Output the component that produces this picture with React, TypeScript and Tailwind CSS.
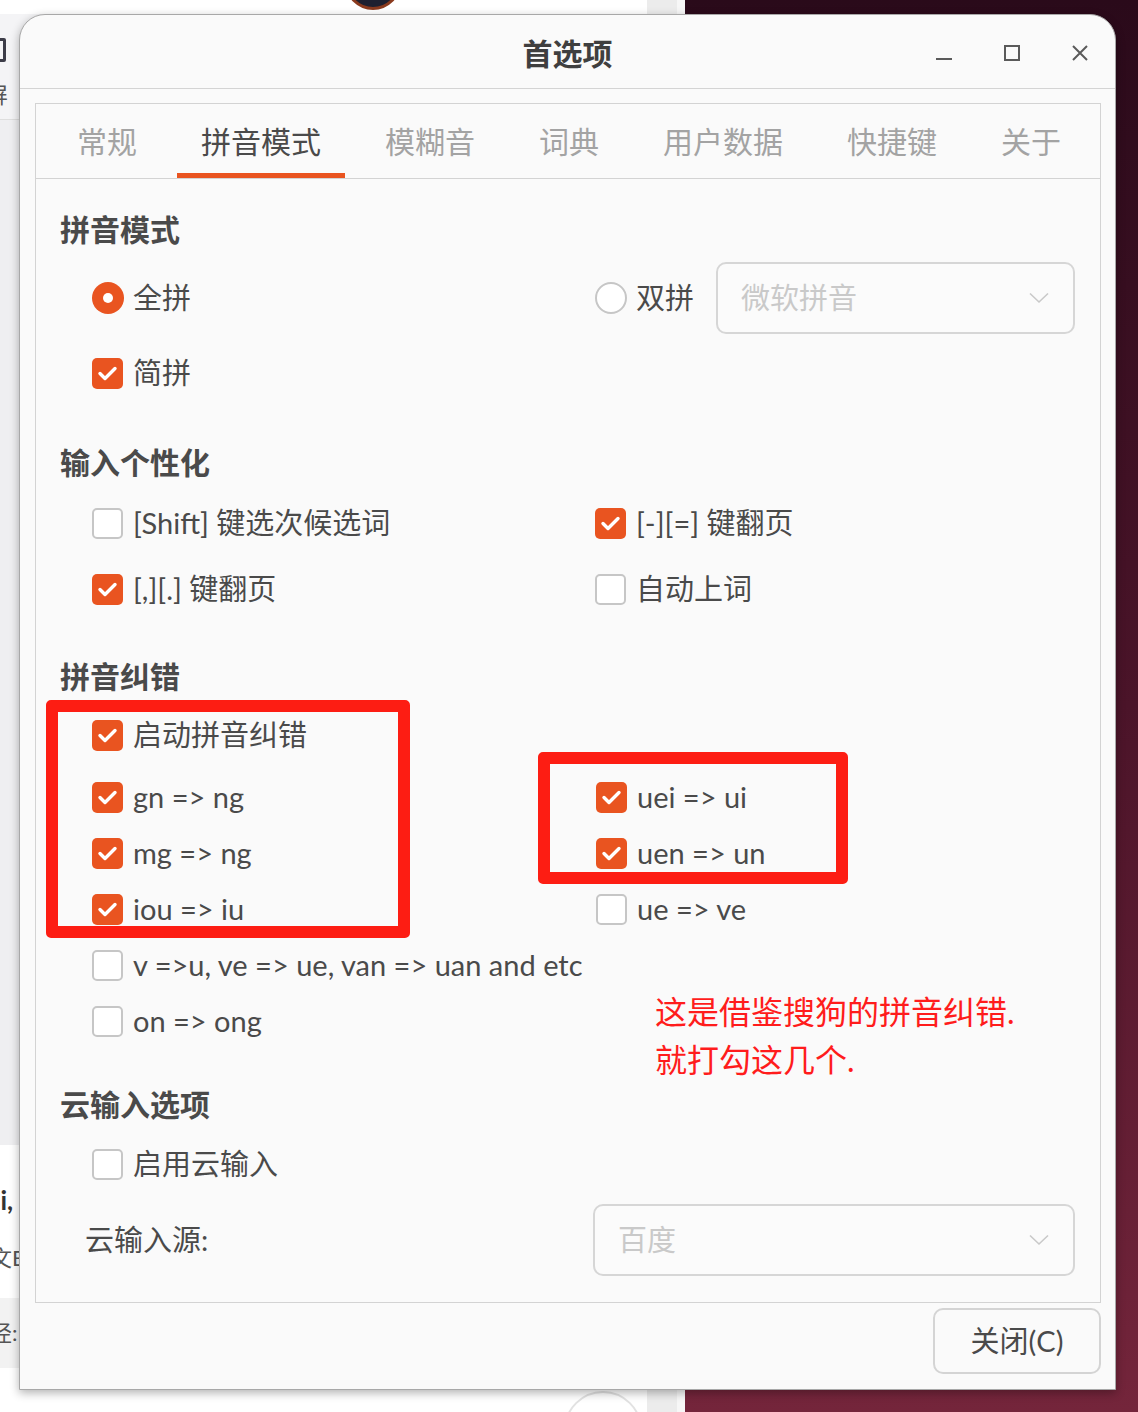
import type { ReactNode } from "react";

const tabs = ["常规", "拼音模式", "模糊音", "词典", "用户数据", "快捷键", "关于"];

function Check({ on }: { on?: boolean }) {
  if (!on) {
    return <span className="h-[31px] w-[31px] shrink-0 rounded-[5px] border-2 border-[#c6c6c6] bg-white" />;
  }
  return (
    <span className="flex h-[31px] w-[31px] shrink-0 items-center justify-center rounded-[5px] bg-[#e95420]">
      <svg width="31" height="31" viewBox="0 0 31 31">
        <path d="M8 15.5l5 5 10-10" fill="none" stroke="#fff" strokeWidth="3.4" strokeLinecap="round" strokeLinejoin="round" />
      </svg>
    </span>
  );
}

function Radio({ on }: { on?: boolean }) {
  return on ? (
    <span className="flex h-[32px] w-[32px] shrink-0 items-center justify-center rounded-full bg-[#e95420]">
      <span className="h-[10px] w-[10px] rounded-full bg-white" />
    </span>
  ) : (
    <span className="h-[32px] w-[32px] shrink-0 rounded-full border-2 border-[#c6c6c6] bg-white" />
  );
}

function Item({ on, children }: { on?: boolean; children?: ReactNode }) {
  if (!children) return <div className="h-[56px]" />;
  return (
    <div className="flex h-[56px] items-center gap-[10px]">
      <Check on={on} />
      <span className="whitespace-nowrap">{children}</span>
    </div>
  );
}

function Header({ children, className = "" }: { children: ReactNode; className?: string }) {
  return <div className={`flex h-[40px] items-center text-[30px] font-bold ${className}`}>{children}</div>;
}

function Combo({ value, className = "" }: { value: string; className?: string }) {
  return (
    <div className={`flex h-[72px] items-center justify-between rounded-[10px] border-2 border-[#d6d6d6] bg-[#fbfbfb] pl-[23px] pr-[24px] ${className}`}>
      <span className="text-[#c9c9c9]">{value}</span>
      <svg width="20" height="12" viewBox="0 0 20 12">
        <path d="M1 1.5l9 8.5 9-8.5" fill="none" stroke="#c9c9c9" strokeWidth="1.6" />
      </svg>
    </div>
  );
}

export default function App() {
  return (
    <div className="relative h-[1412px] w-[1138px] overflow-hidden bg-linear-to-b from-[#2a0a1a] via-[#4b1429] to-[#74253b] font-['Lato','Noto_Sans_CJK_SC',sans-serif] text-[#4a4a4a]">
      {/* window behind */}
      <div className="absolute left-0 top-0 flex h-full w-[685px]">
        <div className="flex w-[647px] flex-col bg-[#efeff1]">
          <div className="h-[14px] bg-white" />
          <div className="relative h-[106px] border-b border-[#dedede] bg-[#f4f4f6]">
            <span className="absolute left-[-8px] top-[24px] h-[24px] w-[14px] rounded-[2px] border-[3px] border-[#3c3c48]" />
            <span className="absolute left-[-14px] top-[64px] text-[22px] text-[#555]">屏</span>
          </div>
          <div className="h-[1025px]" />
          <div className="relative h-[153px] bg-white">
            <span className="absolute left-[-6px] top-[36px] text-[26px] font-bold text-[#333]">li,</span>
            <span className="absolute left-[-10px] top-[96px] text-[22px] text-[#555]">文E</span>
          </div>
          <div className="relative h-[70px] bg-[#f2f2f2]">
            <span className="absolute left-[-10px] top-[18px] text-[22px] text-[#555]">径:</span>
          </div>
          <div className="flex-1 bg-white" />
        </div>
        <div className="w-[30px] bg-[#ececec]" />
        <div className="w-[8px] bg-[#f7f7f7]" />
        <span className="absolute left-[345px] top-[-46px] h-[56px] w-[56px] rounded-full border-[3px] border-[#8a3a1e] bg-[#1e2030]" />
        <span className="absolute left-[564px] top-[1391px] h-[78px] w-[78px] rounded-full border-2 border-[#e2e2e2] bg-white" />
      </div>

      {/* preferences dialog */}
      <div className="absolute left-[19px] top-[14px] flex h-[1376px] w-[1097px] flex-col rounded-t-[26px] border border-[#a8a8a8] bg-[#fafafa] shadow-[0_3px_10px_rgba(0,0,0,0.3)]">
        <div className="grid h-[74px] shrink-0 grid-cols-[1fr_auto_1fr] items-center border-b border-[#d4d4d4]">
          <div />
          <div className="pt-[4px] text-[30px] font-bold text-[#3f3f3f]">首选项</div>
          <div className="flex items-center justify-end gap-[52px] pr-[27px] pt-[2px]">
            <svg width="16" height="16" viewBox="0 0 16 16">
              <path d="M0 14h16" stroke="#5a5a5a" strokeWidth="2" />
            </svg>
            <svg width="16" height="16" viewBox="0 0 16 16">
              <rect x="1" y="1" width="14" height="14" fill="none" stroke="#5a5a5a" strokeWidth="2" />
            </svg>
            <svg width="16" height="16" viewBox="0 0 16 16">
              <path d="M1 1l14 14M15 1L1 15" stroke="#5a5a5a" strokeWidth="2" />
            </svg>
          </div>
        </div>

        {/* notebook */}
        <div className="ml-[15px] mr-[14px] mt-[14px] flex h-[1200px] flex-col border border-[#d3d3d3]">
          <div className="flex h-[75px] shrink-0 gap-4 border-b border-[#d3d3d3] pl-[17px]">
            {tabs.map((t, i) => (
              <div
                key={t}
                className={`flex items-center border-b-[5px] px-6 pt-[5px] text-[30px] ${
                  i === 1 ? "border-[#e95420] text-[#4a4a4a]" : "border-transparent text-[#a3a3a3]"
                }`}
              >
                {t}
              </div>
            ))}
          </div>

          <div className="flex flex-col pl-6 pr-[25px] text-[29px]">
            <Header className="mt-[30px]">拼音模式</Header>
            <div className="mt-[13px] grid grid-cols-[503px_1fr] pl-8">
              <div className="flex h-[72px] items-center gap-[9px]">
                <Radio on />
                <span>全拼</span>
              </div>
              <div className="flex h-[72px] items-center">
                <Radio />
                <span className="ml-[9px]">双拼</span>
                <Combo value="微软拼音" className="ml-[22px] flex-1" />
              </div>
            </div>
            <div className="mt-[11px] pl-8">
              <Item on>简拼</Item>
            </div>

            <Header className="mt-[41px]">输入个性化</Header>
            <div className="mt-[13px] grid grid-cols-[503px_1fr] pl-8">
              <Item>[Shift] 键选次候选词</Item>
              <Item on>[-][=] 键翻页</Item>
            </div>
            <div className="mt-[10px] grid grid-cols-[503px_1fr] pl-8">
              <Item on>[,][.] 键翻页</Item>
              <Item>自动上词</Item>
            </div>

            <Header className="mt-[39px]">拼音纠错</Header>
            <div className="mt-[11px] pl-8">
              <Item on>启动拼音纠错</Item>
            </div>
            <div className="mt-[6px] grid grid-cols-[504px_1fr] pl-8">
              <Item on>gn =&gt; ng</Item>
              <Item on>uei =&gt; ui</Item>
              <Item on>mg =&gt; ng</Item>
              <Item on>uen =&gt; un</Item>
              <Item on>iou =&gt; iu</Item>
              <Item>ue =&gt; ve</Item>
              <Item>v =&gt;u, ve =&gt; ue, van =&gt; uan and etc</Item>
              <Item />
              <Item>on =&gt; ong</Item>
              <Item />
            </div>

            <Header className="mt-[35px]">云输入选项</Header>
            <div className="mt-[12px] pl-8">
              <Item>启用云输入</Item>
            </div>
            <div className="mt-[12px] grid grid-cols-[533px_1fr] items-center">
              <span className="pl-[25px]">云输入源:</span>
              <Combo value="百度" />
            </div>
          </div>
        </div>

        <div className="mr-[14px] mt-[5px] flex justify-end">
          <button className="flex h-[66px] w-[168px] items-center justify-center rounded-[10px] border-2 border-[#d4d4d4] bg-[#fafafa] text-[29px] text-[#4a4a4a]">
            关闭(C)
          </button>
        </div>
      </div>

      {/* annotations drawn over the screenshot */}
      <div className="absolute left-[46px] top-[700px] h-[238px] w-[364px] rounded-[5px] border-[12px] border-[#fd1d13]" />
      <div className="absolute left-[538px] top-[752px] h-[132px] w-[310px] rounded-[5px] border-[12px] border-[#fd1d13]" />
      <div className="absolute left-[655px] top-[988px] text-[32px] leading-[48px] text-[#ff1c1c]">
        <p>这是借鉴搜狗的拼音纠错.</p>
        <p>就打勾这几个.</p>
      </div>
    </div>
  );
}
